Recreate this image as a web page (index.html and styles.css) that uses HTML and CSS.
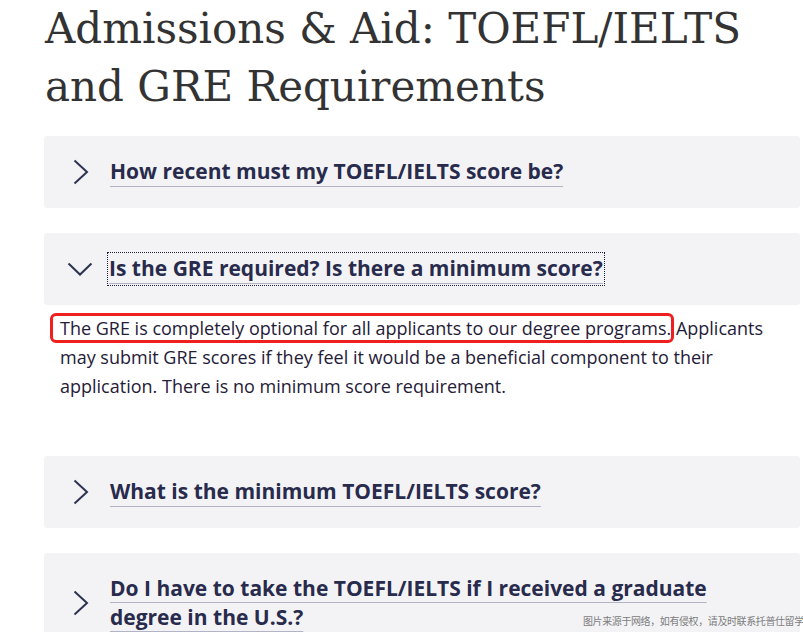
FILE: index.html
```html
<!DOCTYPE html>
<html lang="en">
<head>
<meta charset="utf-8">
<title>Admissions &amp; Aid: TOEFL/IELTS and GRE Requirements</title>
<link rel="stylesheet" href="styles.css">
</head>
<body>
<main class="page">
  <h1 class="title">Admissions &amp; Aid: TOEFL/IELTS and GRE Requirements</h1>

  <section class="faq">
    <div class="item">
      <div class="head">
        <svg class="chev chev-right" width="16" height="26" viewBox="0 0 16 26"><path d="M1.5 1.5 L14 13 L1.5 24.5" fill="none" stroke="currentColor" stroke-width="2"/></svg>
        <span class="q">How recent must my TOEFL/IELTS score be?</span>
      </div>
    </div>

    <div class="item open">
      <div class="head">
        <svg class="chev chev-down" width="26" height="14" viewBox="0 0 26 14"><path d="M1.5 1.5 L13 12.5 L24.5 1.5" fill="none" stroke="currentColor" stroke-width="2"/></svg>
        <span class="q focus">Is the GRE required? Is there a minimum score?</span>
      </div>
    </div>
    <p class="answer"><span class="mark">The GRE is completely optional for all applicants to our degree programs.</span> Applicants may submit GRE scores if they feel it would be a beneficial component to their application. There is no minimum score requirement.</p>

    <div class="item">
      <div class="head">
        <svg class="chev chev-right" width="16" height="26" viewBox="0 0 16 26"><path d="M1.5 1.5 L14 13 L1.5 24.5" fill="none" stroke="currentColor" stroke-width="2"/></svg>
        <span class="q">What is the minimum TOEFL/IELTS score?</span>
      </div>
    </div>

    <div class="item">
      <div class="head tall">
        <svg class="chev chev-right" width="16" height="26" viewBox="0 0 16 26"><path d="M1.5 1.5 L14 13 L1.5 24.5" fill="none" stroke="currentColor" stroke-width="2"/></svg>
        <span class="q multi">Do I have to take the TOEFL/IELTS if I received a graduate degree in the U.S.?</span>
      </div>
    </div>
  </section>
</main>
<div class="watermark">图片来源于网络，如有侵权，请及时联系托普仕留学删除</div>
</body>
</html>
```

FILE: styles.css
```css
html, body {
  margin: 0;
  padding: 0;
  background: #ffffff;
  overflow: hidden;
}

.page {
  width: 756px;
  padding-left: 44px;
}

.title {
  margin: 0 0 20px 0;
  padding: 0 0 0 1px;
  font-family: "DejaVu Serif", "Liberation Serif", serif;
  font-weight: 400;
  font-size: 42px;
  line-height: 58px;
  color: #333333;
}

.faq {
  display: flex;
  flex-direction: column;
}

.item {
  background: #f3f3f6;
  border-radius: 3px;
  margin-bottom: 25px;
}

.item.open {
  margin-bottom: 0;
}

.head {
  height: 72px;
  display: flex;
  align-items: center;
  padding-left: 29px;
  color: #2c3350;
}

.head.tall {
  height: 100px;
}

.chev {
  flex: none;
  display: block;
}

.chev-right {
  margin-right: 21px;
}

.chev-down {
  margin-left: -6px;
  margin-right: 16px;
}

.q {
  font-family: "Open Sans", "Noto Sans", sans-serif;
  font-weight: 700;
  font-size: 21px;
  line-height: 29px;
  color: #282b4c;
  border-bottom: 1px solid #b3b3c6;
}

.q.multi {
  border-bottom: none;
  text-decoration: underline;
  text-decoration-color: #b3b3c6;
  text-decoration-thickness: 1px;
  text-underline-offset: 6px;
  width: 640px;
}

.q.focus {
  outline: 1px dotted #1d1d3a;
  outline-offset: 1px;
}

.answer {
  margin: 9px 0 55px 0;
  padding: 0 24px 0 16px;
  font-family: "Open Sans", "Noto Sans", sans-serif;
  font-size: 18px;
  line-height: 29px;
  color: #1f2038;
}

.mark {
  outline: 3px solid #f01f1f;
  border-radius: 3px;
  padding-left: 7px;
  margin-left: -7px;
}

.watermark {
  position: absolute;
  left: 583px;
  top: 613px;
  white-space: nowrap;
  font-family: "Noto Sans CJK SC", sans-serif;
  font-size: 10px;
  letter-spacing: -0.4px;
  color: #7c7c7c;
}
```
